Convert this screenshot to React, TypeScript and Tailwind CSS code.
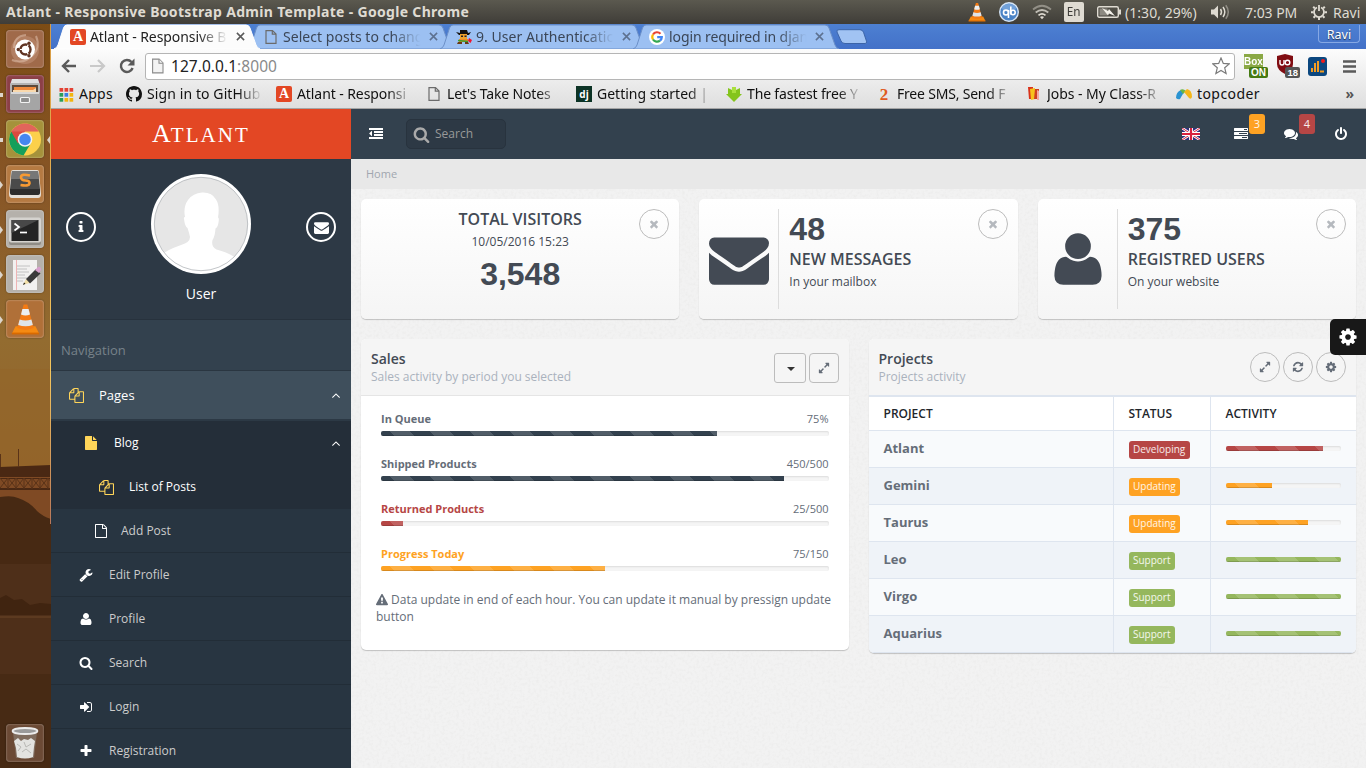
import React from "react";

const FA: Record<string, string> = {
  dedent:
    "M384 544v576q0 13-9.500 22.500t-22.500 9.500q-14 0-23-9l-288-288q-9-9-9-23t9-23l288-288q9-9 23-9 13 0 22.500 9.500t9.500 22.500zm1408 768v192q0 13-9.500 22.500t-22.500 9.500h-1728q-13 0-22.500-9.500t-9.500-22.500v-192q0-13 9.500-22.500t22.500-9.500h1728q13 0 22.500 9.500t9.500 22.500zm0-384v192q0 13-9.500 22.500t-22.500 9.500h-1088q-13 0-22.500-9.500t-9.500-22.500v-192q0-13 9.500-22.500t22.500-9.500h1088q13 0 22.500 9.500t9.500 22.500zm0-384v192q0 13-9.500 22.500t-22.500 9.500h-1088q-13 0-22.500-9.500t-9.500-22.500v-192q0-13 9.500-22.500t22.500-9.500h1088q13 0 22.500 9.500t9.500 22.500zm0-384v192q0 13-9.500 22.500t-22.500 9.500h-1728q-13 0-22.500-9.500t-9.500-22.500v-192q0-13 9.500-22.500t22.500-9.500h1728q13 0 22.500 9.500t9.500 22.500z",
  search:
    "M1216 832q0-185-131.500-316.500t-316.500-131.500-316.500 131.500-131.500 316.500 131.500 316.500 316.500 131.500 316.500-131.500 131.500-316.500zm512 832q0 52-38 90t-90 38q-54 0-90-38l-343-342q-179 124-399 124-143 0-273.500-55.500t-225-150-150-225-55.500-273.500 55.500-273.500 150-225 225-150 273.500-55.500 273.500 55.500 225 150 150 225 55.500 273.500q0 220-124 399l343 343q37 37 37 90z",
  envelope:
    "M1792 710v794q0 66-47 113t-113 47h-1472q-66 0-113-47t-47-113v-794q44 49 101 87 362 246 497 345 57 42 92.500 65.500t94.500 48 110 24.500h2q51 0 110-24.500t94.500-48 92.500-65.500q170-123 498-345 57-39 100-87zm0-294q0 79-49 151t-122 123q-376 261-468 325-10 7-42.500 31t-54 38.500-52 32.500-57.500 27-50 9h-2q-23 0-50-9t-57.500-27-52-32.500-54-38.500-42.500-31q-91-64-262-182.500t-205-142.500q-62-42-117-115.500t-55-136.500q0-78 41.500-130t118.500-52h1472q65 0 112.500 47t47.500 113z",
  times:
    "M1490 1322q0 40-28 68l-136 136q-28 28-68 28t-68-28l-294-294-294 294q-28 28-68 28t-68-28l-136-136q-28-28-28-68t28-68l294-294-294-294q-28-28-28-68t28-68l136-136q28-28 68-28t68 28l294 294 294-294q28-28 68-28t68 28l136 136q28 28 28 68t-28 68l-294 294 294 294q28 28 28 68z",
  plus: "M1600 736v192q0 40-28 68t-68 28h-416v416q0 40-28 68t-68 28h-192q-40 0-68-28t-28-68v-416h-416q-40 0-68-28t-28-68v-192q0-40 28-68t68-28h416v-416q0-40 28-68t68-28h192q40 0 68 28t28 68v416h416q40 0 68 28t28 68z",
  signin:
    "M1312 896q0 26-19 45l-544 544q-19 19-45 19t-45-19-19-45v-288h-448q-26 0-45-19t-19-45v-384q0-26 19-45t45-19h448v-288q0-26 19-45t45-19 45 19l544 544q19 19 19 45zm352-352v704q0 119-84.500 203.500t-203.500 84.500h-320q-13 0-22.500-9.500t-9.500-22.500q0-4-1-20t-.5-26.500 3-23.500 10-19.500 20.500-6.500h320q66 0 113-47t47-113v-704q0-66-47-113t-113-47h-312l-11.500-1-11.500-3-8-5.500-7-9-2-13.500q0-4-1-20t-.5-26.500 3-23.500 10-19.500 20.500-6.500h320q119 0 203.500 84.500t84.500 203.500z",
  cog: "M1152 896q0-106-75-181t-181-75-181 75-75 181 75 181 181 75 181-75 75-181zm512-109v222q0 12-8 23t-20 13l-185 28q-19 54-39 91 35 50 107 138 10 12 10 25t-9 23q-27 37-99 108t-94 71q-12 0-26-9l-138-108q-44 23-91 38-16 136-29 186-7 28-36 28h-222q-14 0-24.500-8.500t-11.500-21.500l-28-184q-49-16-90-37l-141 107q-10 9-25 9-14 0-25-11-126-114-165-168-7-10-7-23 0-12 8-23 15-21 51-66.500t54-70.500q-27-50-41-99l-183-27q-13-2-21-12.500t-8-23.500v-222q0-12 8-23t19-13l186-28q14-46 39-92-40-57-107-138-10-12-10-24 0-10 9-23 26-36 98.500-107.500t94.500-71.500q13 0 26 10l138 107q44-23 91-38 16-136 29-186 7-28 36-28h222q14 0 24.500 8.500t11.500 21.500l28 184q49 16 90 37l142-107q9-9 24-9 13 0 25 10 129 119 165 170 7 8 7 22 0 12-8 23-15 21-51 66.500t-54 70.500q26 50 41 98l183 28q13 2 21 12.500t8 23.500z",
  refresh:
    "M1639 1056q0 5-1 7-64 268-268 434.500t-478 166.500q-146 0-282.500-55t-243.500-157l-129 129q-19 19-45 19t-45-19-19-45v-448q0-26 19-45t45-19h448q26 0 45 19t19 45-19 45l-137 137q71 66 161 102t187 36q134 0 250-65t186-179q11-17 53-117 8-23 30-23h192q13 0 22.500 9.500t9.500 22.500zm25-800v448q0 26-19 45t-45 19h-448q-26 0-45-19t-19-45 19-45l138-138q-148-137-349-137-134 0-250 65t-186 179q-11 17-53 117-8 23-30 23h-199q-13 0-22.500-9.500t-9.500-22.500v-7q65-268 270-434.500t480-166.500q146 0 284 55.500t245 156.500l130-129q19-19 45-19t45 19 19 45z",
  power:
    "M1664 896q0 156-61 298t-164 245-245 164-298 61-298-61-245-164-164-245-61-298q0-182 80.500-343t226.500-270q43-32 95.500-25t83.500 50q32 42 24.500 94.500t-49.500 84.500q-98 74-151.500 181t-53.500 228q0 104 40.500 198.500t109.500 163.500 163.500 109.500 198.500 40.500 198.500-40.500 163.500-109.500 109.500-163.500 40.500-198.500q0-121-53.500-228t-151.500-181q-42-32-49.500-84.500t24.500-94.500q31-43 84-50t95 25q146 109 226.500 270t80.500 343zm-640-768v640q0 52-38 90t-90 38-90-38-38-90v-640q0-52 38-90t90-38 90 38 38 90z",
  comments:
    "M1408 768q0 139-94 257t-256.500 186.500-353.500 68.500q-86 0-176-16-124 88-278 128-36 9-86 16h-3q-11 0-20.500-8t-11.500-21q-1-3-1-6.500t.5-6.500 2-6l2.500-5 3.500-5.500 4-5 4.500-5 4-4.500q5-6 23-25t26-29.500 22.500-29 25-38.500 20.500-44q-124-72-195-177t-71-224q0-139 94-257t256.500-186.500 353.500-68.500 353.500 68.500 256.500 186.500 94 257zm384 256q0 120-71 224.500t-195 176.500q10 24 20.500 44t25 38.500 22.500 29 26 29.500 23 25q1 1 4 4.500t4.500 5 4 5 3.500 5.500l2.500 5 2 6 .5 6.500-1 6.500q-3 14-13 22t-22 7q-50-7-86-16-154-40-278-128-90 16-176 16-271 0-472-132 58 4 88 4 161 0 309-45t264-129q125-92 192-212t67-254q0-77-23-152 129 71 204 178t75 230z",
  wrench:
    "M448 1472q0-26-19-45t-45-19-45 19-19 45 19 45 45 19 45-19 19-45zm644-420l-682 682q-37 37-90 37-52 0-91-37l-106-108q-38-36-38-90 0-53 38-91l681-681q39 98 114.500 173.500t173.500 114.500zm634-435q0 39-23 106-47 134-164.500 217.500t-258.500 83.500q-185 0-316.500-131.500t-131.500-316.500 131.500-316.500 316.500-131.500q58 0 121.500 16.500t107.500 46.500q16 11 16 28t-16 28l-293 169v224l193 107q5-3 79-48.500t135.500-81 70.500-35.500q15 0 23.500 10t8.500 25z",
  file: "M1152 512v-472q22 14 36 28l408 408q14 14 28 36h-472zm-128 32q0 40 28 68t68 28h544v1056q0 40-28 68t-68 28h-1344q-40 0-68-28t-28-68v-1600q0-40 28-68t68-28h800v544z",
  fileO:
    "M1596 380q28 28 48 76t20 88v1152q0 40-28 68t-68 28h-1344q-40 0-68-28t-28-68v-1600q0-40 28-68t68-28h896q40 0 88 20t76 48zm-444-244v376h376q-10-29-22-41l-313-313q-12-12-41-22zm384 1528v-1024h-416q-40 0-68-28t-28-68v-416h-768v1536h1280z",
  filesO:
    "M1696 384q40 0 68 28t28 68v1216q0 40-28 68t-68 28h-960q-40 0-68-28t-28-68v-288h-544q-40 0-68-28t-28-68v-672q0-40 20-88t48-76l408-408q28-28 76-48t88-20h416q40 0 68 28t28 68v328q68-40 128-40h416zm-544 213l-299 299h299v-299zm-640-384l-299 299h299v-299zm196 647l316-316v-416h-384v416q0 40-28 68t-68 28h-416v640h512v-256q0-40 20-88t48-76zm956 804v-1152h-384v416q0 40-28 68t-68 28h-416v640h896z",
  warning:
    "M1024 1375v-190q0-14-9.500-23.500t-22.500-9.500h-192q-13 0-22.500 9.500t-9.500 23.500v190q0 14 9.500 23.500t22.500 9.500h192q13 0 22.500-9.500t9.500-23.500zm-2-374l18-459q0-12-10-19-13-11-24-11h-220q-11 0-24 11-10 7-10 21l17 457q0 10 10 16.500t24 6.500h185q14 0 23.500-6.500t10.500-16.500zm-14-934l768 1408q35 63-2 126-17 29-46.500 46t-63.500 17h-1536q-34 0-63.500-17t-46.500-46q-37-63-2-126l768-1408q17-31 47-49t65-18 65 18 47 49z",
  expand:
    "M883 1056q0 13-10 23l-332 332 144 144q19 19 19 45t-19 45-45 19h-448q-26 0-45-19t-19-45v-448q0-26 19-45t45-19 45 19l144 144 332-332q10-10 23-10t23 10l114 114q10 10 10 23zm781-864v448q0 26-19 45t-45 19-45-19l-144-144-332 332q-10 10-23 10t-23-10l-114-114q-10-10-10-23t10-23l332-332-144-144q-19-19-19-45t19-45 45-19h448q26 0 45 19t19 45z",
  angleUp:
    "M1395 1184q0 13-10 23l-50 50q-10 10-23 10t-23-10l-393-393-393 393q-10 10-23 10t-23-10l-50-50q-10-10-10-23t10-23l466-466q10-10 23-10t23 10l466 466q10 10 10 23z",
  info: "M1216 1344v128q0 26-19 45t-45 19h-512q-26 0-45-19t-19-45v-128q0-26 19-45t45-19h64v-384h-64q-26 0-45-19t-19-45v-128q0-26 19-45t45-19h384q26 0 45 19t19 45v576h64q26 0 45 19t19 45zm-128-1152v192q0 26-19 45t-45 19h-256q-26 0-45-19t-19-45v-192q0-26 19-45t45-19h256q26 0 45 19t19 45z",
  tasks:
    "M1024 1408h640v-128h-640v128zm-384-512h1024v-128h-1024v128zm640-512h384v-128h-384v128zm512 832v256q0 26-19 45t-45 19h-1664q-26 0-45-19t-19-45v-256q0-26 19-45t45-19h1664q26 0 45 19t19 45zm0-512v256q0 26-19 45t-45 19h-1664q-26 0-45-19t-19-45v-256q0-26 19-45t45-19h1664q26 0 45 19t19 45zm0-512v256q0 26-19 45t-45 19h-1664q-26 0-45-19t-19-45v-256q0-26 19-45t45-19h1664q26 0 45 19t19 45z",
};
const USER_PATH =
  "M1408 131q0 -120 -73 -189.500t-194 -69.500h-874q-121 0 -194 69.500t-73 189.500q0 53 3.500 103.500t14 109t26.500 108.500t43 97.500t62 81t85.500 53.500t111.500 20q9 0 42 -21.500t74.500 -48t108 -48t133.500 -21.500t133.500 21.500t108 48t74.500 48t42 21.500q61 0 111.500 -20t85.500 -53.500t62 -81t43 -97.500t26.500 -108.500t14 -109t3.500 -103.500zM1088 1024q0 -159 -112.500 -271.500t-271.500 -112.500t-271.500 112.500t-112.500 271.500t112.500 271.500t271.500 112.500t271.500 -112.500t112.500 -271.500z";

function Icon({ name, className = "size-3.5" }: { name: string; className?: string }) {
  return (
    <svg viewBox="0 0 1792 1792" className={"shrink-0 " + className} fill="currentColor">
      {name === "user" ? (
        <path d={USER_PATH} transform="translate(192 1536) scale(1 -1)" />
      ) : (
        <path d={FA[name]} />
      )}
    </svg>
  );
}

const FADE = "[mask-image:linear-gradient(to_right,black_78%,transparent_99%)]";

/* ---------- Desktop top panel ---------- */

function Cone({ className }: { className: string }) {
  return (
    <svg viewBox="0 0 32 34" className={className}>
      <path d="M5 25h22l4 8H1z" fill="#f58a12" />
      <path d="M1 32h30v2H1z" fill="#d96a00" />
      <path d="M14 1h4l7 26q-9 4-18 0z" fill="#f47b14" />
      <path d="M12.600 6h6.800l1.600 6q-5 2-10 0z" fill="#eceff1" />
      <path d="M9.500 17.500q6.500 2.500 13 0l1.600 6q-8 3-16.200 0z" fill="#dfe4e8" />
    </svg>
  );
}

function TopPanel() {
  return (
    <div className="flex h-6 items-center bg-gradient-to-b from-[#5b594f] to-[#3f3d38] pl-[6px] pr-[5px] font-['Noto_Sans'] text-[#dfdbd2]">
      <div className="flex-1 whitespace-nowrap text-[14px] font-bold leading-6 tracking-[0.320px]">
        Atlant - Responsive Bootstrap Admin Template - Google Chrome
      </div>
      <Cone className="mr-[13px] h-[20px] w-[18px]" />
      <svg viewBox="0 0 20 20" className="mr-[13px] size-5">
        <circle cx="10" cy="10" r="9.300" fill="#4a83c6" stroke="#d6e4f4" strokeWidth="1.400" />
        <ellipse cx="10" cy="6" rx="7" ry="4" fill="#8db5e4" opacity=".6" />
        <g fill="none" stroke="#fff" strokeWidth="1.600">
          <circle cx="7" cy="10.500" r="2.500" />
          <path d="M9.500 8v8M11.800 4.500v8" />
          <circle cx="14" cy="10.500" r="2.200" />
        </g>
      </svg>
      <svg viewBox="0 0 20 16" className="mr-[12px] h-4 w-5" fill="none" stroke="#dfdbd2" strokeWidth="1.700">
        <path d="M1 5.500q9-7.500 18 0" opacity=".45" />
        <path d="M3.700 8.500q6.300-5 12.600 0" opacity=".8" />
        <path d="M6.500 11.300q3.500-2.700 7 0" />
        <path d="M10 15.300l-2-2.300q2-1.300 4 0z" fill="#dfdbd2" stroke="none" />
      </svg>
      <div className="mr-[13px] flex h-5 w-5 items-center justify-center rounded-[2px] bg-[#dfdbd2] text-[13px] text-[#3c3b37]">
        <span className="scale-x-90">En</span>
      </div>
      <svg viewBox="0 0 25 12" className="mr-[3px] h-3 w-[25px]">
        <rect x=".7" y=".7" width="20.600" height="10.600" rx="1.500" fill="none" stroke="#dfdbd2" strokeWidth="1.400" />
        <rect x="22" y="3.500" width="2" height="5" fill="#dfdbd2" />
        <rect x="2.500" y="2.500" width="8" height="7" fill="#8d8a82" />
        <path d="M5 2l6 3 1-2 6 7-6-2.500-1 2z" fill="#f2efe8" />
      </svg>
      <div className="w-[73px] whitespace-nowrap text-[14px] tracking-[0.050px]">(1:30, 29%)</div>
      <svg viewBox="0 0 20 16" className="ml-[12px] h-4 w-5" fill="none" stroke="#dfdbd2" strokeWidth="1.500">
        <path d="M1 5.500h3l4-4v13l-4-4H1z" fill="#dfdbd2" stroke="none" />
        <path d="M10.500 5q2 3 0 6" />
        <path d="M13 3q3.600 5 0 10" />
        <path d="M15.800 1.300q5 6.700 0 13.400" opacity=".45" />
      </svg>
      <div className="ml-[15px] w-[53px] whitespace-nowrap text-[14px] tracking-[-0.050px]">7:03 PM</div>
      <svg viewBox="0 0 16 16" className="ml-[13px] size-4" fill="none" stroke="#dfdbd2">
        <path d="M6 3.500a5 5 0 1 0 4 0" strokeWidth="1.800" />
        <path d="M8 1v6" strokeWidth="1.800" />
        <path
          d="M2.200 2.700l1.600 1.600M13.800 2.700l-1.600 1.600M0 8.300h2.500M13.500 8.300H16M2.500 13.800l1.600-1.600M13.500 13.800l-1.600-1.600M8 13v3"
          strokeWidth="2"
        />
      </svg>
      <div className="ml-[6px] w-[28px] whitespace-nowrap text-[14px]">Ravi</div>
    </div>
  );
}

/* ---------- Launcher ---------- */

function LauncherScene() {
  return (
    <svg viewBox="0 0 51 744" preserveAspectRatio="none" className="absolute inset-0 h-full w-[51px]">
      <defs>
        <linearGradient id="sky" x1="0" y1="0" x2="0" y2="1">
          <stop offset="0" stopColor="#7c4c15" />
          <stop offset=".35" stopColor="#875526" />
          <stop offset=".7" stopColor="#936c30" />
          <stop offset="1" stopColor="#93622a" />
        </linearGradient>
        <linearGradient id="edge" x1="0" y1="0" x2="0" y2="1">
          <stop offset="0" stopColor="#d79b45" />
          <stop offset=".7" stopColor="#f4c55d" />
          <stop offset="1" stopColor="#b9775a" />
        </linearGradient>
      </defs>
      <rect width="51" height="450" fill="url(#sky)" />
      <path d="M0 345h51v98H0z" fill="#93662a" opacity=".6" />
      <path d="M0 443h51v110H0z" fill="#7f4a24" />
      <path d="M0 443l51-2v12H0z" fill="#4a2813" />
      <path d="M0 464h51v2H0zM0 454h51v1H0z" fill="#4a2813" />
      <path
        d="M0 454l8 10 8-10 8 10 8-10 8 10 8-10 3 4M0 464l8-10 8 10 8-10 8 10 8-10 8 10M8 454v11M16 454v11M24 454v11M32 454v11M40 454v11M48 454v11M18.500 425v18M.5 430v13"
        fill="none"
        stroke="#5a3318"
      />
      <path d="M0 473q12-2 18 1 12 4 19 13 5 5 14 8v70H0z" fill="#472913" />
      <path d="M0 540h51v204H0z" fill="#4e2f19" />
      <path d="M0 574l6-3 8 5 8-1 8 6 10-2 11 1v11H0z" fill="#402410" />
      <path d="M0 592h51v2H0z" fill="#5c3a20" />
      <path d="M0 650h51v94H0z" fill="#442813" opacity=".7" />
      <rect x="50" width="1" height="500" fill="url(#edge)" />
    </svg>
  );
}

const launcher: { bg: string; arrow: boolean; art: React.ReactNode }[] = [
  {
    bg: "bg-[#a06a4a]",
    arrow: false,
    art: (
      <>
        <circle cx="19" cy="20" r="14" fill="#c79a80" opacity=".45" />
        <path d="M6 30q12 5 22-6M30 6q5 12-4 20M8 18Q8 6 20 5" fill="none" stroke="#dbb9a5" strokeWidth="2" opacity=".6" />
        <circle cx="19" cy="19.500" r="10" fill="#fff" />
        <circle cx="19.500" cy="19.500" r="5" fill="none" stroke="#5f3322" strokeWidth="2.400" />
        <path d="M19.500 19.500h-9M19.500 19.500l4.500-8M19.500 19.500l4.500 8" stroke="#fff" strokeWidth="1.200" />
        <g fill="#5f3322">
          <circle cx="12.300" cy="19.500" r="1.700" />
          <circle cx="23" cy="13.200" r="1.700" />
          <circle cx="23" cy="25.800" r="1.700" />
        </g>
      </>
    ),
  },
  {
    bg: "bg-[#8c3f47]",
    arrow: true,
    art: (
      <>
        <path d="M6 4h26l2 6H4z" fill="#e0e0e0" />
        <rect x="4" y="8" width="30" height="27" rx="2" fill="#b4b4b4" />
        <rect x="6" y="10" width="26" height="8" fill="#5d4a3c" />
        <path d="M8 12h22v4H8z" fill="#f08a3c" />
        <path d="M7 15h20l3-2v4H7z" fill="#f9d9ad" />
        <rect x="4" y="17" width="30" height="18" rx="1.500" fill="#a5a5a5" />
        <rect x="5" y="17" width="28" height="2" fill="#d8d8d8" />
        <rect x="14.500" y="22.500" width="9" height="5" rx="1" fill="#8e8e8e" stroke="#f2f2f2" strokeWidth="1.200" />
      </>
    ),
  },
  {
    bg: "bg-[#a5923b]",
    arrow: true,
    art: (
      <>
        <circle cx="19" cy="19.500" r="16" fill="#fcd04b" />
        <path d="M19 19.500L5.200 11.500A16 16 0 0 0 17.500 35.400L25 23z" fill="#159f5b" />
        <path d="M5.200 11.500A16 16 0 0 1 32.800 11.500H19l-7 12z" fill="#dc4a3f" />
        <circle cx="19" cy="19.500" r="7.300" fill="#f3f3f3" />
        <circle cx="19" cy="19.500" r="5.800" fill="#4687f0" />
        <path d="M5.200 11.500A16 16 0 0 1 32.800 11.500z" fill="#fff" opacity=".15" />
      </>
    ),
  },
  {
    bg: "bg-[#b57a42]",
    arrow: true,
    art: (
      <>
        <path d="M5 7q0-2 2-2h24q2 0 2 2l2 22q0 4-3 4H6q-3 0-3-4z" fill="#e5e0da" />
        <path d="M6 6h26l2 18H4z" fill="#4a4a4a" />
        <path d="M4 24h30v4q0 2-3 2H7q-3 0-3-2z" fill="#2d2d2d" />
        <path d="M6 6h26l1 8H5z" fill="#777" />
        <path d="M24 10.500q-9-2-9 1.500t4.500 3.500 4 3-9 1.500" fill="none" stroke="#f79a33" strokeWidth="2.600" />
      </>
    ),
  },
  {
    bg: "bg-[#b5b1ab]",
    arrow: true,
    art: (
      <>
        <rect x="3" y="8" width="32" height="27" rx="2" fill="#8f8c86" />
        <rect x="3" y="7.500" width="32" height="25" rx="2" fill="#d5d3cf" />
        <rect x="5.500" y="10" width="27" height="21" fill="#242424" />
        <path d="M5.500 10h27l-27 13z" fill="#484848" />
        <path d="M8.500 13.500l4.500 3.500-4.500 3.500" fill="none" stroke="#fff" strokeWidth="1.700" />
        <path d="M14 22.500h7" stroke="#fff" strokeWidth="1.700" />
      </>
    ),
  },
  {
    bg: "bg-[#b5b1ab]",
    arrow: true,
    art: (
      <>
        <path d="M7 5h24v30H7z" fill="#f2f1f0" />
        <path d="M10.500 5v30" stroke="#eeb4b4" />
        <path d="M11 11h13M11 14h10M11 17h12M11 20h8M11 23h10M11 26h6" stroke="#c2c2c2" />
        <path d="M17 30l3-6 5 3.500z" fill="#f1dfa8" />
        <path d="M20 24L30 14l4.500 4.500L24 28.500z" fill="#3a3a3a" />
        <path d="M29 15l3-3q3-1 3 3l-2 3z" fill="#d7a0cc" />
        <path d="M17 30l1-2.500 1.500 1.300z" fill="#222" />
      </>
    ),
  },
  { bg: "bg-[#b07038]", arrow: true, art: null },
];

function Tile({ bg, children }: { bg: string; children: React.ReactNode }) {
  return (
    <div
      className={
        "relative size-[38px] rounded-[4px] shadow-[inset_0_0_2px_rgba(255,255,255,0.5),0_0_2px_rgba(0,0,0,0.4)] " + bg
      }
    >
      {children}
    </div>
  );
}

function Launcher() {
  return (
    <div className="relative flex w-[51px] shrink-0 flex-col overflow-hidden">
      <LauncherScene />
      <div className="relative flex flex-1 flex-col gap-[7px] pl-[6px] pt-[6px]">
        {launcher.map((l, i) => (
          <Tile key={i} bg={l.bg}>
            {l.art ? (
              <svg viewBox="0 0 38 38" className="size-[38px]">
                {l.art}
              </svg>
            ) : (
              <Cone className="mx-auto h-[36px] w-[29px] pt-[2px]" />
            )}
            {l.arrow && (
              <svg viewBox="0 0 3 8" className="absolute -left-[6px] top-[16px] h-2 w-[3px]">
                <path d={i < 3 ? "M0 2h3v4H0z" : "M0 0l3 4-3 4z"} fill="#ddd6cc" />
              </svg>
            )}
            {i === 2 && (
              <svg viewBox="0 0 3 8" className="absolute -right-[6px] top-[16px] h-2 w-[3px]">
                <path d="M3 0L0 4l3 4z" fill="#ddd6cc" />
              </svg>
            )}
          </Tile>
        ))}
      </div>
      <div className="relative pb-[6px] pl-[6px]">
        <Tile bg="bg-[#6b4a35]">
          <svg viewBox="0 0 38 38" className="size-[38px]">
            <path d="M7 8h24l-3 26H10z" fill="#8f8880" opacity=".55" />
            <ellipse cx="19" cy="7" rx="12.500" ry="3" fill="#9a9a9a" stroke="#ececec" strokeWidth="1.800" />
            <path d="M8 17l4-3 3 3 3-2 4 1 3-2 4 3-1 6-1 10q-8 3-16 0L10 24z" fill="#e3e3e0" />
            <path d="M11 20l4 3-3 4M18 18l2 5 5-3M16 28l4-3 5 4" fill="none" stroke="#b9b9b5" />
          </svg>
        </Tile>
      </div>
    </div>
  );
}

/* ---------- Browser chrome ---------- */

function AtlantFav() {
  return (
    <div className="flex size-4 shrink-0 items-center justify-center rounded-[2px] bg-[#e34724] font-['Liberation_Serif'] text-[14px] font-bold leading-none text-white">
      A
    </div>
  );
}
function PageFav() {
  return (
    <svg viewBox="0 0 16 16" className="size-4 shrink-0" fill="none" stroke="#6b6b6b" strokeWidth="1.200">
      <path d="M3 1.600h6.500L13 5v9.400H3z" />
      <path d="M9.300 1.800V5.200H13" />
    </svg>
  );
}
function FarmerFav() {
  return (
    <svg viewBox="0 0 16 16" className="size-4 shrink-0">
      <path d="M4 1h7l1 3 3-1-2 3H3L0 3l4 1z" fill="#15120f" />
      <path d="M4 5h7v6H4z" fill="#f0a12c" />
      <path d="M5 6.500h2v1.500H5zM8.500 6.500h2v1.500h-2z" fill="#222" />
      <path d="M3 10h9v3H3z" fill="#ef8d23" />
      <path d="M2 11.500l10 1" stroke="#3b9c35" strokeWidth="1.500" />
      <path d="M1 15h5v-2H2zM9 13h3l1 2H9z" fill="#6b3b16" />
      <path d="M13 9l3 2-1.500 3-2.500-2z" fill="#ee1430" />
    </svg>
  );
}
function GoogleFav() {
  return (
    <svg viewBox="0 0 16 16" className="size-4 shrink-0" fill="none" strokeWidth="2.200">
      <circle cx="8" cy="8" r="8" fill="#fff" stroke="none" />
      <path d="M4 5.500A4.800 4.800 0 0 1 11.500 4.700" stroke="#e94335" />
      <path d="M4 5.500a4.800 4.800 0 0 0 0 5" stroke="#fabb05" />
      <path d="M4 10.500a4.800 4.800 0 0 0 7 1.200" stroke="#34a853" />
      <path d="M11 11.700A4.800 4.800 0 0 0 12.800 8.100H8.200" stroke="#4285f4" />
    </svg>
  );
}

const tabs = [
  { title: "Atlant - Responsive B", fav: <AtlantFav />, active: true, cls: "tracking-[-0.080px]" },
  { title: "Select posts to chang", fav: <PageFav />, active: false, cls: "tracking-[0.050px]" },
  { title: "9. User Authenticatic", fav: <FarmerFav />, active: false, cls: "tracking-[0.050px]" },
  { title: "login required in djan", fav: <GoogleFav />, active: false, cls: "tracking-[-0.100px]" },
];

function TabStrip() {
  return (
    <div className="flex h-[25px] bg-gradient-to-b from-[#4d80d2] to-[#4371c8] pl-[6px]">
      {tabs.map((t, i) => (
        <div key={i} className={"relative h-[25px] w-[193px] " + (t.active ? "z-10" : "")}>
          <svg viewBox="0 0 206 25" className="absolute -left-[3px] top-0 h-[25px] w-[206px]">
            <path
              d="M0 25q3-1 4-4L9.500 4Q10.500 1 13 1H192q3 0 4 3l6 17q1 3 4 4z"
              fill={t.active ? "#fcfcfc" : "#9cc0f2"}
              stroke={t.active ? "#fff" : "#6c90c8"}
              strokeWidth="1"
            />
          </svg>
          <div className="relative flex h-full items-center pl-[13px] font-['Noto_Sans'] text-[14px]">
            {t.fav}
            <div
              className={
                "ml-1 w-[139px] overflow-hidden whitespace-nowrap leading-6 " +
                FADE +
                " " +
                t.cls +
                (t.active ? " text-[#222]" : " text-[#3b4657]")
              }
            >
              {t.title}
            </div>
            <svg
              viewBox="0 0 10 10"
              className="ml-[7px] size-[9px] shrink-0"
              stroke={t.active ? "#5a5a5a" : "#5d7190"}
              strokeWidth="1.700"
            >
              <path d="M1 1l8 8M9 1L1 9" />
            </svg>
          </div>
        </div>
      ))}
      <svg viewBox="0 0 32 16" className="ml-[7px] mt-[5px] h-4 w-8">
        <path d="M3 .7h21q2.500 0 3.500 2.500l3 9q.8 2.300-1.500 2.300H9q-3 0-4-2.500L1 3Q.3.700 3 .7z" fill="#a1c3f3" stroke="#3c64a8" />
      </svg>
      <div className="flex-1" />
      <div className="mr-[6px] mt-px h-[18px] w-[42px] rounded-b-[4px] border border-t-0 border-[#86a8e4] text-center font-['Noto_Sans'] text-[12.500px] leading-[20px] text-white [text-shadow:0_1px_1px_#234]">
        Ravi
      </div>
    </div>
  );
}

function Toolbar() {
  return (
    <div className="flex h-[34px] items-center pl-[9px] pr-[10px]">
      <svg viewBox="0 0 18 16" className="h-4 w-[18px]" fill="none" stroke="#5a5a5a" strokeWidth="2.400">
        <path d="M16 8H3M9 2L3 8l6 6" />
      </svg>
      <svg viewBox="0 0 18 16" className="ml-[11px] h-4 w-[18px]" fill="none" stroke="#c9c9c9" strokeWidth="2.200">
        <path d="M1 8h13M9 2l6 6-6 6" />
      </svg>
      <svg viewBox="0 0 16 16" className="ml-[12px] size-4" fill="none" stroke="#5a5a5a" strokeWidth="2.400">
        <path d="M13.600 10A6 6 0 1 1 12.500 4" />
        <path d="M15.500.5v7h-7z" fill="#5a5a5a" stroke="none" />
      </svg>
      <div className="ml-[10px] flex h-[27px] w-[1090px] items-center rounded-[3px] border border-[#b5b5b5] bg-white pl-[4px] pr-[4px]">
        <svg viewBox="0 0 16 16" className="size-4" fill="#f3f3f3" stroke="#8b8b8b" strokeWidth="1.100">
          <path d="M2.600 1.100h6.500L13 5v9.900H2.600z" />
          <path d="M9 1.300V5.200h4" />
        </svg>
        <div className="ml-[5px] flex-1 font-['Noto_Sans'] text-[15.500px] leading-6 tracking-[0.050px] text-[#8a8a8a]">
          <span className="text-[#222]">127.0.0.1</span>:8000
        </div>
        <svg viewBox="0 0 18 18" className="size-[18px]" fill="none" stroke="#7b7b7b" strokeWidth="1.200">
          <path d="M9 1l2.300 5.400 5.900.5-4.500 3.900 1.400 5.700L9 13.500l-5.100 3 1.400-5.700L.8 6.900l5.900-.5z" />
        </svg>
      </div>
      <div className="relative ml-[9px] h-[24px] w-[24px] font-['Liberation_Sans'] font-bold leading-none text-white">
        <div className="flex h-[15px] w-[19px] items-center justify-center bg-[#8aa844] text-[11px]">
          <span className="scale-x-90">Box</span>
        </div>
        <div className="absolute bottom-0 right-0 rounded-[2px] bg-[#457a12] px-[2px] text-[10px] leading-[11px]">ON</div>
      </div>
      <div className="relative ml-[8px] h-[24px] w-[24px]">
        <svg viewBox="0 0 18 20" className="h-[20px] w-[18px]">
          <path d="M9 0l8 2v8q0 6-8 10-8-4-8-10V2z" fill="#800d12" />
          <path d="M4 6v3q0 2 2 2t2-2V6" fill="none" stroke="#fff" strokeWidth="1.400" />
          <circle cx="11.500" cy="8.500" r="2.300" fill="none" stroke="#fff" strokeWidth="1.400" />
        </svg>
        <div className="absolute bottom-0 right-0 rounded-[2px] bg-[#555] px-[2px] font-['Liberation_Sans'] text-[9.500px] font-bold leading-[11px] text-white">
          18
        </div>
      </div>
      <svg viewBox="0 0 19 19" className="ml-[8px] size-[19px]">
        <rect width="19" height="19" rx="3" fill="#0b477f" />
        <path d="M4 15V11M7 15V6M10 15V4M12 14.500h4" stroke="#f39c1f" strokeWidth="2" />
        <circle cx="15" cy="4" r="2" fill="#f01a1a" />
      </svg>
      <svg viewBox="0 0 13 13" className="ml-[16px] size-[13px]" stroke="#5a5a5a" strokeWidth="2.600">
        <path d="M0 1.500h13M0 6.500h13M0 11.500h13" />
      </svg>
    </div>
  );
}

function Bookmark({ icon, label, box, cls = "" }: { icon: React.ReactNode; label: string; box: string; cls?: string }) {
  return (
    <div className="flex shrink-0 items-center">
      {icon}
      <div className={"ml-[5px] overflow-hidden whitespace-nowrap leading-[22px] " + box + " " + cls}>{label}</div>
    </div>
  );
}

function BookmarkBar() {
  const gh = (
    <svg viewBox="0 0 16 16" className="size-4 shrink-0">
      <path
        fill="#111"
        d="M8 0C3.580 0 0 3.580 0 8c0 3.540 2.290 6.530 5.470 7.590.4.070.55-.17.55-.38 0-.19-.01-.82-.01-1.490-2.010.37-2.530-.49-2.690-.94-.09-.23-.48-.94-.82-1.130-.28-.15-.68-.52-.01-.53.63-.01 1.080.58 1.230.82.72 1.210 1.870.87 2.330.66.070-.52.28-.87.51-1.070-1.780-.2-3.640-.89-3.640-3.950 0-.87.31-1.590.82-2.150-.08-.2-.36-1.020.08-2.120 0 0 .67-.21 2.200.82.64-.18 1.320-.27 2-.27s1.360.09 2 .27c1.530-1.040 2.200-.82 2.200-.82.44 1.100.16 1.920.08 2.120.51.56.82 1.270.82 2.150 0 3.070-1.870 3.750-3.650 3.950.29.25.54.73.54 1.480 0 1.070-.01 1.930-.01 2.200 0 .21.15.46.55.38A8.010 8.010 0 0 0 16 8c0-4.420-3.580-8-8-8z"
      />
    </svg>
  );
  const colors = ["#e34133", "#e34133", "#e34133", "#2a9d59", "#3b7de0", "#f2b50c", "#2a9d59", "#f2b50c", "#f2b50c"];
  return (
    <div className="flex h-[26px] items-center border-b border-[#a5a5a5] pb-[3px] pl-[7px] font-['Noto_Sans'] text-[14px] text-[#111]">
      <div className="w-[68px]">
        <Bookmark
          box="w-[38px]"
          label="Apps"
          cls="tracking-[0.250px]"
          icon={
            <svg viewBox="0 0 15 15" className="h-[15px] w-[16px] shrink-0">
              {colors.map((c, i) => (
                <rect key={i} x={(i % 3) * 5 + 1} y={Math.floor(i / 3) * 5 + 1} width="3.700" height="3.700" fill={c} />
              ))}
            </svg>
          }
        />
      </div>
      <div className="w-[150px]">
        <Bookmark icon={gh} label="Sign in to GitHub" box={"w-[117px] " + FADE} cls="tracking-[0.100px]" />
      </div>
      <div className="w-[150px]">
        <Bookmark icon={<AtlantFav />} label="Atlant - Responsi" box={"w-[117px] " + FADE} cls="tracking-[-0.080px]" />
      </div>
      <div className="w-[150px]">
        <Bookmark icon={<PageFav />} label="Let's Take Notes" box={"w-[117px] " + FADE} cls="tracking-[-0.150px]" />
      </div>
      <div className="w-[150px]">
        <Bookmark
          icon={
            <div className="flex size-4 shrink-0 items-center justify-center bg-[#0c3325] font-['Open_Sans'] text-[10px] font-bold leading-none text-white">
              dj
            </div>
          }
          label="Getting started |"
          box={"w-[117px] " + FADE}
        />
      </div>
      <div className="w-[150px]">
        <Bookmark
          icon={
            <svg viewBox="0 0 16 16" className="size-4 shrink-0">
              <path d="M2 2l4 2V1h4v3l4-2v6h2l-8 8-8-8h2z" fill="#84c41c" />
              <path d="M6 1h4v6H6z" fill="#a9e03c" />
            </svg>
          }
          label="The fastest free Y"
          box={"w-[117px] " + FADE}
          cls="tracking-[-0.150px]"
        />
      </div>
      <div className="w-[150px]">
        <Bookmark
          icon={
            <div className="flex size-4 shrink-0 items-center justify-center font-['Liberation_Serif'] text-[17px] font-bold leading-none text-[#e05a20]">
              2
            </div>
          }
          label="Free SMS, Send F"
          box={"w-[117px] " + FADE}
          cls="tracking-[-0.200px]"
        />
      </div>
      <div className="w-[150px]">
        <Bookmark
          icon={
            <svg viewBox="0 0 16 16" className="size-4 shrink-0">
              <path d="M2 1h5v12H3z" fill="#d9331b" />
              <path d="M4 3l5-1v11l-4 1z" fill="#f7c21c" />
              <path d="M9 3h4v10H8z" fill="#cf4020" />
              <path d="M11 14V4l2 1v9z" fill="#f4a8a0" />
            </svg>
          }
          label="Jobs - My Class-R"
          box={"w-[117px] " + FADE}
          cls="tracking-[-0.050px]"
        />
      </div>
      <Bookmark
        icon={
          <svg viewBox="0 0 16 16" className="size-4 shrink-0">
            <path d="M0 12q0-6 5-8l3 2-4 7q-2 1-4-1z" fill="#2b93d1" />
            <path d="M4 4q3-2 6 1l-3 3z" fill="#68b648" />
            <path d="M8 6l3-3q5 1 5 8-1 3-3 1z" fill="#f5b619" />
          </svg>
        }
        label="topcoder"
        box="w-[70px]"
        cls="tracking-[0.420px]"
      />
      <div className="flex-1" />
      <div className="pr-[12px] text-[14px] font-bold leading-[22px] text-[#555]">»</div>
    </div>
  );
}

/* ---------- Admin sidebar ---------- */

function Sidebar() {
  const subs = [
    { icon: "wrench", label: "Edit Profile" },
    { icon: "user", label: "Profile" },
    { icon: "search", label: "Search" },
    { icon: "signin", label: "Login" },
    { icon: "plus", label: "Registration" },
  ];
  return (
    <div className="flex w-[300px] shrink-0 flex-col overflow-hidden bg-[#283541] text-[12px] text-white">
      <div className="flex h-[50px] shrink-0 items-center justify-center bg-[#e34724] font-['Liberation_Serif'] leading-none text-white">
        <div className="flex items-baseline">
          <span className="text-[26px]">A</span>
          <span className="text-[21px] tracking-[2.100px]">TLANT</span>
        </div>
      </div>
      <div className="flex h-[161px] shrink-0 flex-col border-b border-[#27323d] bg-[#2d3945]">
        <div className="flex items-center justify-between px-[15px] pt-[15px]">
          <div className="mt-1.5 flex size-[30px] items-center justify-center rounded-full border-2 border-white">
            <Icon name="info" className="size-3.5" />
          </div>
          <svg viewBox="0 0 100 100" className="size-[100px]">
            <defs>
              <clipPath id="avatar">
                <circle cx="50" cy="50" r="47" />
              </clipPath>
            </defs>
            <circle cx="50" cy="50" r="50" fill="#fff" />
            <circle cx="50" cy="50" r="46.700" fill="#e6e6e6" />
            <path
              clipPath="url(#avatar)"
              d="M33 45q-.5-2 1-2Q32 33 37 26q5-7 14-7.500 10-.5 14 7 4 6 2 18 1.300 0 .5 5-.8 5-3 6-.5 8-3 11.500-1.500 7 4 9.500 14 4 20 9V100H10V81q6-5 20-10 9-2.500 9-8-.8-4-2.500-9-2.500-1-3.500-9z"
              fill="#fff"
            />
            <circle cx="50" cy="50" r="46.700" fill="none" stroke="#a9adb1" strokeWidth=".7" />
          </svg>
          <div className="mt-1.5 flex size-[30px] items-center justify-center rounded-full border-2 border-white">
            <Icon name="envelope" className="size-[15px]" />
          </div>
        </div>
        <div className="mt-[10px] text-center text-[14px] leading-5">User</div>
      </div>
      <div className="flex h-[51px] shrink-0 items-end border-b border-[#2a3641] bg-[#33414e] px-[10px] pb-[11px] text-[13px] leading-[18px] text-[#77828a]">
        Navigation
      </div>
      <div className="flex h-[50px] shrink-0 items-center border-b-2 border-[#2c3945] bg-[#3f4f5c] pl-[18px] pr-[8px]">
        <Icon name="filesO" className="size-[15px] text-[#ffd559]" />
        <span className="ml-[15px] flex-1 text-[13px] leading-[18px]">Pages</span>
        <Icon name="angleUp" />
      </div>
      <div className="flex h-[44px] shrink-0 items-center bg-[#242e39] pl-[33px] pr-[8px]">
        <Icon name="file" className="size-3.5 text-[#ffd559]" />
        <span className="ml-[16px] flex-1">Blog</span>
        <Icon name="angleUp" />
      </div>
      <div className="flex h-[44px] shrink-0 items-center bg-[#242e39] pl-[48px]">
        <Icon name="filesO" className="size-[15px] text-[#ffd559]" />
        <span className="ml-[15px]">List of Posts</span>
      </div>
      <div className="flex h-[44px] shrink-0 items-center border-b border-[#222d37] pl-[43px]">
        <Icon name="fileO" />
        <span className="ml-[13px] text-[#ccc]">Add Post</span>
      </div>
      {subs.map((s) => (
        <div key={s.label} className="flex h-[44px] shrink-0 items-center border-b border-[#222d37] pl-[28px]">
          <Icon name={s.icon} />
          <span className="ml-[16px] text-[#ccc]">{s.label}</span>
        </div>
      ))}
    </div>
  );
}

/* ---------- Admin main ---------- */

function UkFlag() {
  return (
    <svg viewBox="0 0 18 12" className="h-3 w-[18px]">
      <rect width="18" height="12" fill="#2d2f7d" />
      <path d="M0 0l18 12M18 0L0 12" stroke="#fff" strokeWidth="2.600" />
      <path d="M0 0l18 12M18 0L0 12" stroke="#d8203f" strokeWidth="1" />
      <path d="M9 0v12M0 6h18" stroke="#fff" strokeWidth="4" />
      <path d="M9 0v12M0 6h18" stroke="#d8203f" strokeWidth="2.200" />
    </svg>
  );
}

function Header() {
  return (
    <div className="flex h-[50px] shrink-0 items-center bg-[#33414e] text-white">
      <div className="flex w-[50px] justify-center">
        <Icon name="dedent" />
      </div>
      <div className="ml-[5px] flex h-[30px] w-[100px] items-center rounded-[5px] border border-[#28333e] bg-[#2d3945] pl-[6px]">
        <Icon name="search" className="size-[17px] text-[#aaa]" />
        <span className="ml-[5px] text-[12px] text-[#999]">Search</span>
      </div>
      <div className="flex-1" />
      <div className="flex w-[50px] justify-center pb-px">
        <UkFlag />
      </div>
      <div className="relative flex h-[50px] w-[50px] items-center justify-center">
        <Icon name="tasks" />
        <span className="absolute left-[33px] top-[5px] h-5 w-4 rounded-[3px] bg-[#fea223] text-center text-[11px] leading-5 text-white/90">
          3
        </span>
      </div>
      <div className="relative flex h-[50px] w-[50px] items-center justify-center">
        <Icon name="comments" />
        <span className="absolute left-[33px] top-[5px] h-5 w-4 rounded-[3px] bg-[#b64645] text-center text-[11px] leading-5 text-white/90">
          4
        </span>
      </div>
      <div className="flex w-[50px] justify-center">
        <Icon name="power" />
      </div>
    </div>
  );
}

function RoundButton({ icon, cls }: { icon: string; cls: string }) {
  return (
    <div className={"flex size-[30px] items-center justify-center rounded-full border border-[#bcbcbc] " + cls}>
      <Icon name={icon} className="size-3" />
    </div>
  );
}

const CARD =
  "h-[120px] flex-1 rounded-[5px] bg-gradient-to-b from-white to-[#f5f5f5] shadow-[0_1px_1px_rgba(0,0,0,0.2)] text-[#434a54]";

function IconWidget({ icon, num, title, sub }: { icon: string; num: string; title: string; sub: string }) {
  return (
    <div className={CARD + " flex p-[10px]"}>
      <div className="flex w-[70px] items-center border-r border-[#ddd] pr-[9px]">
        <Icon name={icon} className="size-[60px]" />
      </div>
      <div className="flex-1 pl-[10px] pt-[3px]">
        <div className="font-['Liberation_Sans'] text-[32px] font-bold leading-[34px]">{num}</div>
        <div className="whitespace-nowrap text-[16px] font-semibold leading-[26px]">{title}</div>
        <div className="mt-px text-[12px] leading-[18px]">{sub}</div>
      </div>
      <RoundButton icon="times" cls="text-[#b5b9be]" />
    </div>
  );
}

function Bar({ pct, color }: { pct: number; color: string }) {
  return (
    <div className="h-[5px] overflow-hidden rounded-[2px] bg-[#f5f5f5] shadow-[inset_0_1px_2px_rgba(0,0,0,0.1)]">
      <div
        className={
          "h-full bg-[linear-gradient(45deg,rgba(255,255,255,0.15)_25%,transparent_25%,transparent_50%,rgba(255,255,255,0.15)_50%,rgba(255,255,255,0.15)_75%,transparent_75%,transparent)] bg-[length:40px_40px] bg-[position:9px_0] shadow-[inset_0_-1px_0_rgba(0,0,0,0.15)] " +
          color
        }
        style={{ width: `${pct}%` }}
      />
    </div>
  );
}

const SALES = [
  { label: "In Queue", value: "75%", pct: 75, color: "bg-[#33414e]", text: "text-[#656d78]" },
  { label: "Shipped Products", value: "450/500", pct: 90, color: "bg-[#33414e]", text: "text-[#656d78]" },
  { label: "Returned Products", value: "25/500", pct: 5, color: "bg-[#b64645]", text: "text-[#b64645]" },
  { label: "Progress Today", value: "75/150", pct: 50, color: "bg-[#fea223]", text: "text-[#fea223]" },
];

const PROJECTS = [
  { name: "Atlant", status: "Developing", pct: 84.5, color: "bg-[#b64645]" },
  { name: "Gemini", status: "Updating", pct: 40, color: "bg-[#fea223]" },
  { name: "Taurus", status: "Updating", pct: 71.5, color: "bg-[#fea223]" },
  { name: "Leo", status: "Support", pct: 100, color: "bg-[#95b75d]" },
  { name: "Virgo", status: "Support", pct: 100, color: "bg-[#95b75d]" },
  { name: "Aquarius", status: "Support", pct: 100, color: "bg-[#95b75d]" },
];

const PANEL = "flex-1 overflow-hidden rounded-[5px] bg-white shadow-[0_1px_1px_rgba(0,0,0,0.2)]";

function PanelTitle({ title, sub }: { title: string; sub: string }) {
  return (
    <div className="flex-1 pt-[10px]">
      <div className="text-[14px] font-semibold leading-[20px] text-[#434a54]">{title}</div>
      <div className="text-[12px] leading-[16px] text-[#aab2bd]">{sub}</div>
    </div>
  );
}

function Main() {
  return (
    <div className="relative flex flex-1 flex-col overflow-hidden bg-[#f2f2f2]">
      <svg className="absolute inset-0 h-full w-full">
        <filter id="paper" x="0" y="0" width="100%" height="100%">
          <feTurbulence type="fractalNoise" baseFrequency="0.35" numOctaves="3" seed="4" />
          <feColorMatrix values="0 0 0 0 0.55  0 0 0 0 0.54  0 0 0 0 0.52  0.26 0 0 0 -0.11" />
        </filter>
        <rect width="100%" height="100%" filter="url(#paper)" />
      </svg>
      <div className="relative flex flex-1 flex-col">
        <Header />
        <div className="h-[30px] bg-[#e8e8e8] pl-[15px] text-[11px] leading-[30px] text-[#a0a6af]">Home</div>
        <div className="flex gap-5 p-[10px]">
          <div className={CARD + " grid grid-cols-[30px_1fr_30px] p-[10px]"}>
            <div />
            <div className="text-center">
              <div className="text-[16px] font-semibold leading-[20px]">TOTAL VISITORS</div>
              <div className="mt-[4px] text-[12px] leading-[18px]">10/05/2016 15:23</div>
              <div className="mt-[6px] font-['Liberation_Sans'] text-[32px] font-bold leading-[34px]">3,548</div>
            </div>
            <RoundButton icon="times" cls="text-[#b5b9be]" />
          </div>
          <IconWidget icon="envelope" num="48" title="NEW MESSAGES" sub="In your mailbox" />
          <IconWidget icon="user" num="375" title="REGISTRED USERS" sub="On your website" />
        </div>
        <div className="flex items-start gap-5 px-[10px] pt-[10px]">
          <div className={PANEL}>
            <div className="flex h-[57px] border-b border-[#e5e5e5] bg-[#f5f5f5] px-[10px]">
              <PanelTitle title="Sales" sub="Sales activity by period you selected" />
              <div className="mt-[14px] flex gap-[3px] text-[#656d78]">
                <div className="flex h-[30px] w-[32px] items-center justify-center rounded-[3px] border border-[#bcbcbc]">
                  <div className="ml-[3px] mt-[2px] border-x-4 border-t-4 border-x-transparent border-t-[#333]" />
                </div>
                <div className="flex size-[30px] items-center justify-center rounded-[4px] border border-[#bcbcbc]">
                  <Icon name="expand" className="size-3" />
                </div>
              </div>
            </div>
            <div className="flex h-[254px] flex-col px-[15px] pt-[15px]">
              {SALES.map((s) => (
                <div key={s.label} className="h-[45px] px-[5px] text-[11px]">
                  <div className="flex justify-between leading-[16px]">
                    <span className={"font-bold " + s.text}>{s.label}</span>
                    <span className="text-[#656d78]">{s.value}</span>
                  </div>
                  <div className="pt-[4px]">
                    <Bar pct={s.pct} color={s.color} />
                  </div>
                </div>
              ))}
              <div className="text-[12px] leading-[17px] text-[#656d78]">
                <Icon name="warning" className="mr-[3px] inline size-3 align-[-2px]" />
                Data update in end of each hour. You can update it manual by pressign update button
              </div>
            </div>
          </div>
          <div className={PANEL}>
            <div className="flex h-[56px] bg-[#f5f5f5] px-[10px]">
              <PanelTitle title="Projects" sub="Projects activity" />
              <div className="mt-[13px] flex gap-[3px]">
                <RoundButton icon="expand" cls="text-[#656d78]" />
                <RoundButton icon="refresh" cls="text-[#656d78]" />
                <RoundButton icon="cog" cls="text-[#656d78]" />
              </div>
            </div>
            <div className="grid grid-cols-[245px_97px_1fr] border-t-2 border-[#dee5ef] text-[12px] font-semibold leading-[33px] text-[#22262b]">
              <div className="h-[34px] border-b border-r border-[#dee5ef] pl-[15px]">PROJECT</div>
              <div className="border-b border-r border-[#dee5ef] pl-[15px]">STATUS</div>
              <div className="border-b border-[#dee5ef] pl-[15px]">ACTIVITY</div>
            </div>
            {PROJECTS.map((p, i) => (
              <div
                key={p.name}
                className={"grid h-[37px] grid-cols-[245px_97px_1fr] " + (i % 2 ? "bg-[#eff3f8]" : "bg-[#f8fafc]")}
              >
                <div className="border-b border-r border-[#dee5ef] pl-[15px] text-[13px] font-bold leading-[35px] text-[#656d78]">
                  {p.name}
                </div>
                <div className="border-b border-r border-[#dee5ef] pl-[15px] pt-[10px]">
                  <div
                    className={
                      "h-[18px] w-fit rounded-[3px] px-[4.500px] text-[10px] leading-[17px] text-white/90 " + p.color
                    }
                  >
                    {p.status}
                  </div>
                </div>
                <div className="border-b border-[#dee5ef] px-[15px] pt-[15px]">
                  <Bar pct={p.pct} color={p.color} />
                </div>
              </div>
            ))}
          </div>
        </div>
      </div>
      <div className="absolute right-0 top-[210px] flex h-[36px] w-[36px] items-center justify-center rounded-l-[5px] bg-[#181818] text-white">
        <Icon name="cog" className="size-5" />
      </div>
    </div>
  );
}

export default function App() {
  return (
    <div className="flex h-[768px] w-[1366px] flex-col overflow-hidden font-['Open_Sans',sans-serif]">
      <TopPanel />
      <div className="flex min-h-0 flex-1">
        <Launcher />
        <div className="flex min-w-0 flex-1 flex-col">
          <TabStrip />
          <div className="bg-gradient-to-b from-[#fcfcfc] to-[#dedede]">
            <Toolbar />
            <BookmarkBar />
          </div>
          <div className="flex min-h-0 flex-1">
            <Sidebar />
            <Main />
          </div>
        </div>
      </div>
    </div>
  );
}
